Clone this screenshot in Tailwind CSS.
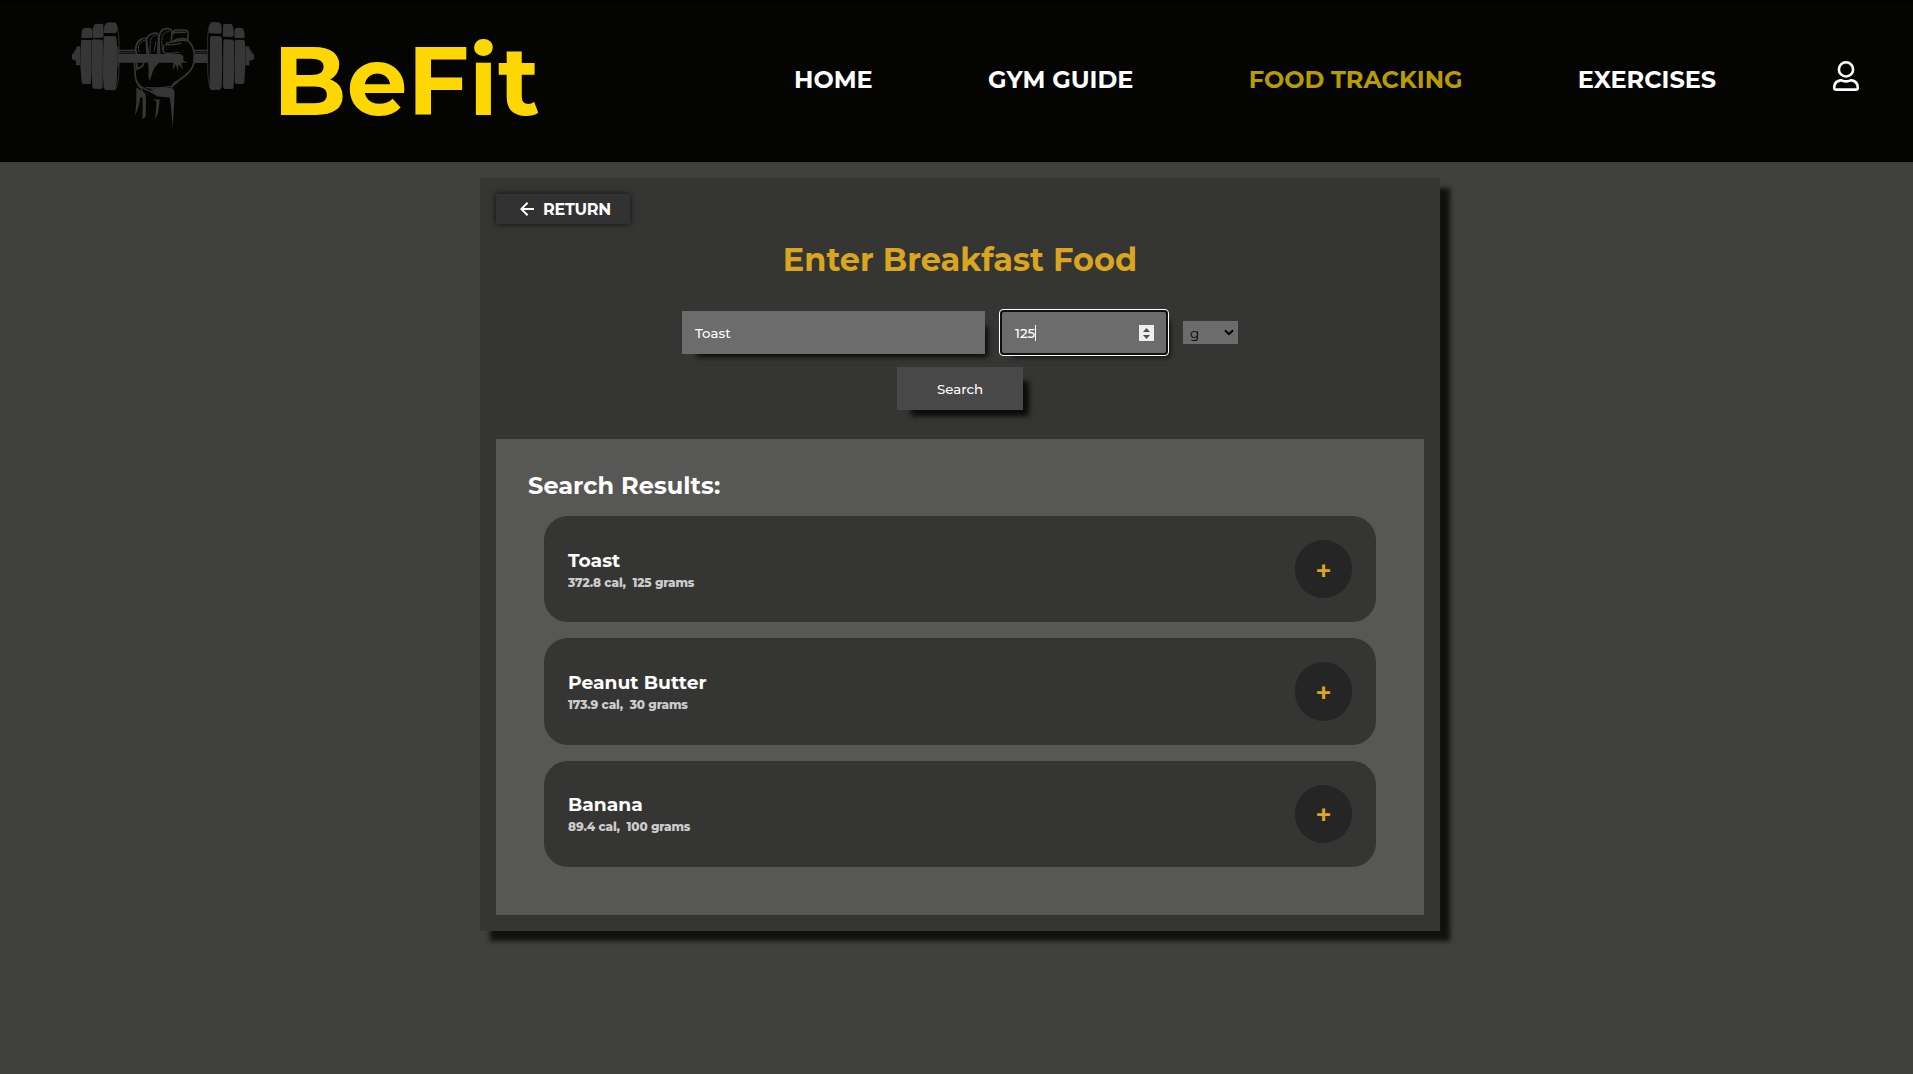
<!DOCTYPE html>
<html lang="en">
<head>
<meta charset="utf-8">
<title>BeFit - Food Tracking</title>
<script src="https://cdn.jsdelivr.net/npm/@tailwindcss/browser@4"></script>
</head>
<body class="h-[1074px] overflow-hidden bg-[#40403e] font-['Montserrat','Inter',sans-serif] text-white">
<header class="flex h-[162px] items-start border-y border-black bg-[#040402]">
  <svg class="ml-[50px] h-[160px] w-[224px] shrink-0" viewBox="0 3 672 480" fill="#363636">
    <!-- left weight -->
    <path d="M66 163l5-5 8-2v-12h12v-5h-10v4M66 163v14l6 4 6 1v14h13v-54H78v14z"/>
    <path d="M98 86q10-4 25-2l4 6-1 23-31 2-1-12zM93 122l4-3 26 1 2 4-2 125-3 3H99l-4-5-4-50z"/>
    <path d="M133 73q15-3 27-1l1 37-4 4-28 1-2-5 1-22zM126 121l3-3 28 1 2 4-1 138-3 6-24-1-4-3-3-60z"/>
    <path d="M170 68q14-3 27 0l4 8 0 20-5 3-32 1-3-5 2-17zM161 111l3-3 33 1 3 8 2 40-1 80-4 31-5 3-26-1-5-7-3-50z"/>
    <path d="M198 72q8 12 9 50v88q-1 40-10 58" fill="none" stroke="#363636" stroke-width="2.5"/>
    <path d="M202 140h4v62h-4z"/>
    <!-- right weight -->
    <path d="M611 163l-4-5-9-2v-12h-12v-5h10v4M612 163v14l-6 4-8 1v14h-12v-54h12v14z"/>
    <path d="M558 84q14-2 22 2l4 17-1 12-27-1-3-5 1-20zM554 123l3-4 24 1 4 5 1 70-3 53-5 4h-20l-4-5z"/>
    <path d="M520 73q12-3 26 0l5 14v20l-5 4-26-1-2-4zM520 122l3-4 26 1 3 5 1 80-2 60-4 3h-23l-5-6z"/>
    <path d="M483 67q14-2 28 1l4 13v17l-4 3-33-1-2-4 2-20zM480 112l4-4 28 1 4 6 1 80-2 68-5 6-26 1-5-8z"/>
    <path d="M481 72q-8 12-8 50v88q1 40 9 58" fill="none" stroke="#363636" stroke-width="2.5"/>
    <!-- bar -->
    <path d="M204 149h54v5h-54zM204 162h186l10 6v20H204zM208 157h48v3h-48zM430 149h43v5h-43zM432 162h41v27h-44zM432 157h38v3h-38z"/>
    <!-- fist -->
    <g fill="none" stroke="#363636" stroke-width="5" stroke-linejoin="round" stroke-linecap="round">
      <path d="M261 164q-7-12-3-25 3-14 13-20 8-5 17-4l8 47"/>
      <path d="M267 156q-5-18 3-27 6-7 14-8" stroke-width="3"/>
      <path d="M292 163q-4-30-2-46 3-11 14-15 10-4 17-2 6 4 5 12l-3 50"/>
      <path d="M301 158q-2-28 3-44 5-8 15-8M312 155l6-30" stroke-width="3"/>
      <path d="M329 163q-3-36-1-56 3-14 12-19 10-4 19-1 8 3 7 14l-2 20"/>
      <path d="M337 150q-4-32 2-46 7-11 18-10" stroke-width="3"/>
      <path d="M370 100q-2-9 7-10l28 0q9 1 10 9l-2 20q-20-8-42 3M373 97l34 0"/>
      <path d="M350 129l32-6q24-6 34 1 14 12 17 38 2 28-9 45-12 18-40 35-16 8-19 19"/>
      <path d="M341 136l-1 20q8 6 20 4l25-3M346 134h24l22-4" stroke-width="4"/>
      <path d="M253 188l3 40q1 16 9 27 10 8 12 20M260 190l1 18 16-9 4-9"/>
      <path d="M288 263l38 1 40-5 18-14" stroke-width="4"/>
      <path d="M259 242q12 22 36 30 16 6 28 15" stroke-width="4"/>
    </g>
    <path d="M294 186l36 1q-16 12-22 28-4 14-9 28-6-16-3-34zM362 163q20 0 28 9 4 10 24 16-14 1-24-3 8 10 8 28-5-16-13-20 1 14-3 20-1-14-6-20-1 10-7 16 0-12 1-22-12 0-20-6z"/>
    <path d="M292 266l40-2 34 0 6 6 2 10-2 40-4 62-5-58-4-32-18-1-22-2 15-4-22-4 10-3-26-4 14-3zM300 276l36 2 22 16-30-6z"/>
    <path d="M259 262q14 12 27 18l2 20-1 50-10 8 1-30 0-34q-4-3-7-2-3 28-16 56l4-42z"/>
    <path d="M308 296q12 4 21 2-2 26-6 44l-8 16 3-30 2-22q-4-4-12-10z"/>
  </svg>
  <div class="-ml-px mt-[20px] w-[269px] shrink-0 text-[96px]/[120px] font-bold tracking-[.2px] text-[#ffd700]">BeFit</div>
  <nav class="ml-[252px] mt-[63px] flex h-8 w-[1067.5px] items-center justify-between whitespace-nowrap text-2xl/8 font-bold">
    <a>HOME</a><a>GYM GUIDE</a><a class="text-[#b89c00]">FOOD TRACKING</a><a>EXERCISES</a>
    <svg class="-mt-[9px] h-[30px] w-[30px] -translate-x-px" viewBox="0 0 30 30" fill="none" stroke="#fff" stroke-width="2.6" stroke-linejoin="round">
      <circle cx="15" cy="8.4" r="7.1"/>
      <path d="M9.3 19.4q-6.1 1.2-6.1 7.2 0 2 1.6 2h20.4q1.6 0 1.6-2 0-6-6.1-7.2-1.2-.2-2.2.3-3.500 1.300-7 0-1-.5-2.200-.3z"/>
    </svg>
  </nav>
</header>

<main class="ml-[480px] mt-4 flex h-[753px] w-[960px] flex-col bg-[#353533] px-4 pt-4 shadow-[10px_10px_5px_rgba(0,0,0,0.75)]">
  <button class="flex h-[30px] w-[134px] items-center bg-[#323232] pl-6 text-base font-bold shadow-[0_0_6px_rgba(0,0,0,0.7)]">
    <svg class="mr-[9px] h-[14px] w-[14px]" viewBox="0 0 14 14" fill="none" stroke="#fff" stroke-width="1.9"><path d="M7.600 .8L1.300 7l6.300 6.200M1.300 7H14"/></svg><span class="pt-[2px] tracking-[-.25px]">RETURN</span>
  </button>
  <h1 class="mt-4 text-center text-[32px]/10 font-bold text-[#daa520]">Enter Breakfast Food</h1>
  <div class="mt-[29px] flex h-[47px] items-center pl-[186px]">
    <div class="h-[43px] w-[303px] bg-[#6c6c6c] pl-[13px] text-[13.33px]/[44px] font-medium shadow-[9px_9px_5px_-6px_rgba(0,0,0,0.8)]">Toast</div>
    <div class="ml-[14px] h-[47px] w-[170px] rounded-[4px] border border-white bg-[#101010] p-[2px] shadow-[7px_7px_5px_-6px_rgba(0,0,0,0.8)]">
      <div class="flex h-[41px] w-full items-center rounded-[2px] bg-[#6c6c6c] pl-[13px] text-[13.33px]/[44px] font-medium">
        <span>125</span><span class="h-4 w-px bg-white"></span>
        <svg class="ml-auto mr-[12px] h-4 w-[15px] bg-[#efefef]" viewBox="0 0 15 16" fill="#505050"><path d="M7.500 3l3.500 4H4zM7.500 14l3.500-4H4z"/></svg>
      </div>
    </div>
    <div class="ml-[14px] flex h-[23px] w-[55px] items-center bg-[#6c6c6c] pl-[7px] text-[13.33px]/[23px] text-black">
      <span class="mt-[2px]">g</span>
      <svg class="ml-auto mr-[4.500px] h-[7px] w-[10px]" viewBox="0 0 10 7" fill="none" stroke="#000" stroke-width="2"><path d="M1 1.200l4 4 4-4"/></svg>
    </div>
  </div>
  <button class="mx-auto mt-[11px] h-[43px] w-[126px] shrink-0 bg-[#484848] pt-px text-[13.33px]/[43px] font-medium shadow-[10px_10px_5px_-4px_rgba(0,0,0,0.8)]">Search</button>
  <section class="mt-[29px] h-[476px] shrink-0 bg-[#575755] px-8 pt-8">
    <h2 class="h-[45px] text-2xl/[29px] font-bold tracking-[.07px]">Search Results:</h2>
    <ul class="flex flex-col gap-4 px-4">
      <li class="flex h-[106.33px] items-center justify-between rounded-[24px] bg-[#353533] px-6">
        <div class="pt-[4px] font-bold"><h3 class="text-[18.72px]/[23px]">Toast</h3><p class="text-xs/[21px] font-extrabold tracking-[-.12px] text-[#ccc]">372.8 cal,&nbsp; 125 grams</p></div>
        <button class="h-[58.33px] w-[57px] rounded-full bg-[#252525] pt-px text-[28px] font-semibold text-[#daa520]">+</button>
      </li>
      <li class="flex h-[106.33px] items-center justify-between rounded-[24px] bg-[#353533] px-6">
        <div class="pt-[4px] font-bold"><h3 class="text-[18.72px]/[23px]">Peanut Butter</h3><p class="text-xs/[21px] font-extrabold tracking-[-.12px] text-[#ccc]">173.9 cal,&nbsp; 30 grams</p></div>
        <button class="h-[58.33px] w-[57px] rounded-full bg-[#252525] pt-px text-[28px] font-semibold text-[#daa520]">+</button>
      </li>
      <li class="flex h-[106.33px] items-center justify-between rounded-[24px] bg-[#353533] px-6">
        <div class="pt-[3px] font-bold"><h3 class="text-[18.72px]/[23px]">Banana</h3><p class="text-xs/[22px] font-extrabold tracking-[-.12px] text-[#ccc]">89.4 cal,&nbsp; 100 grams</p></div>
        <button class="h-[58.33px] w-[57px] rounded-full bg-[#252525] text-[28px] font-semibold text-[#daa520]">+</button>
      </li>
    </ul>
  </section>
</main>
</body>
</html>
